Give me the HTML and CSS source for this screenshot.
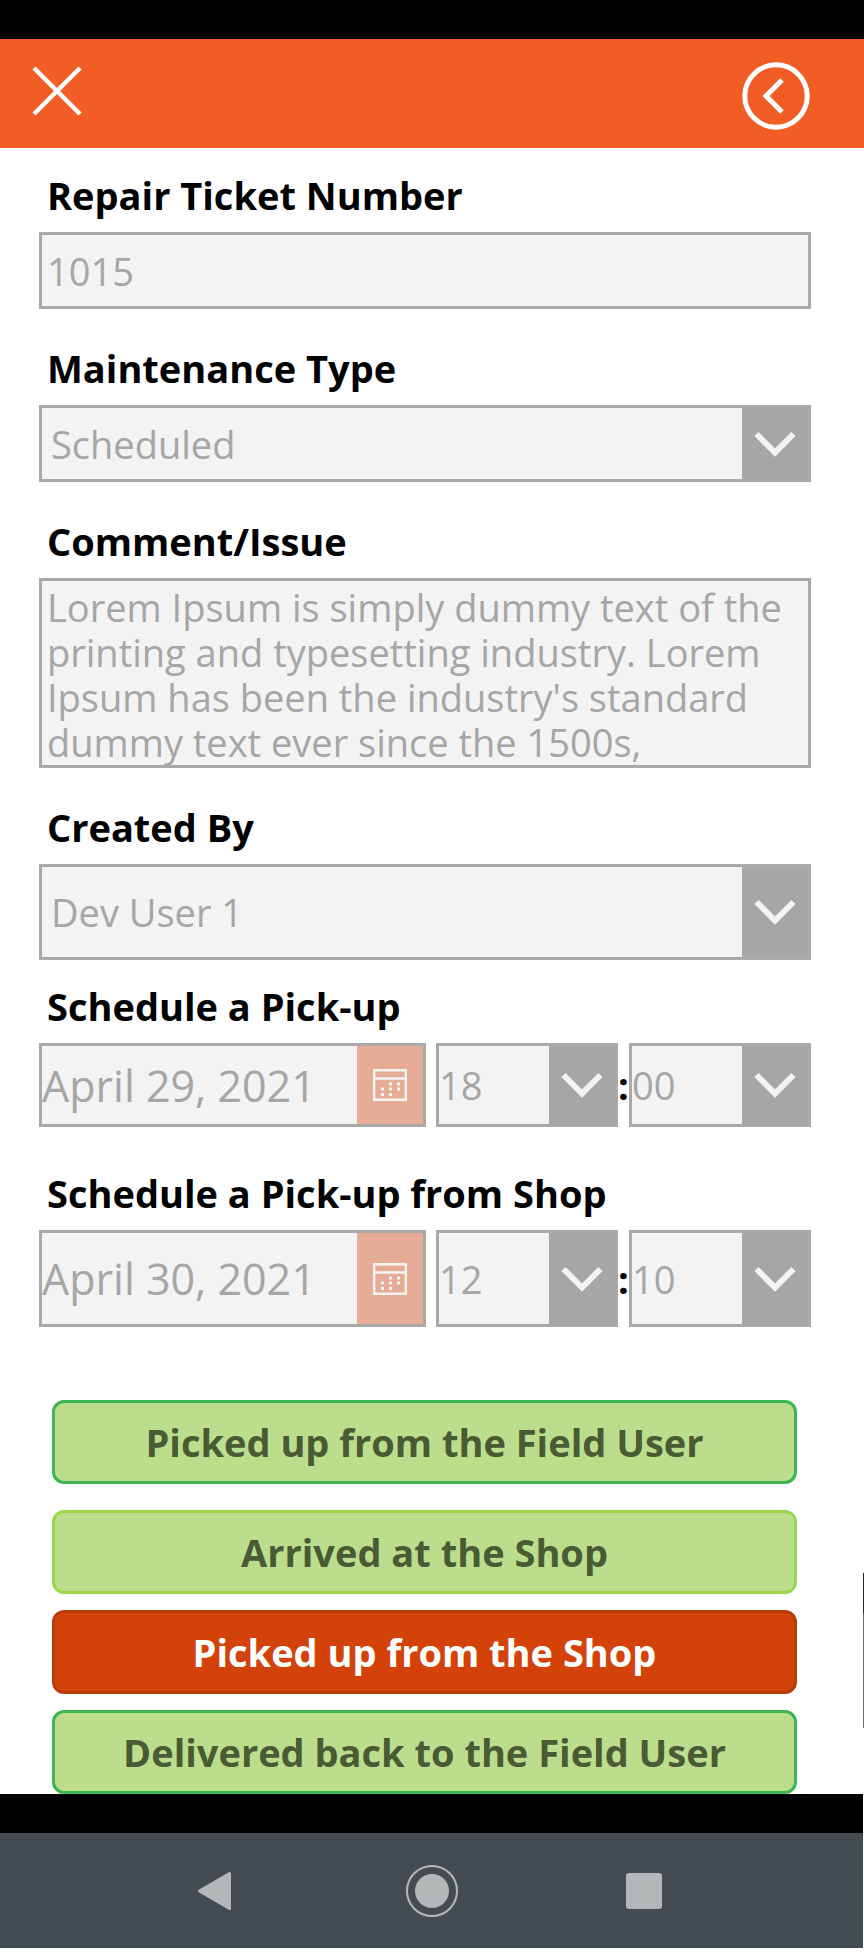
FILE: index.html
```html
<!DOCTYPE html>
<html lang="en">
<head>
    <meta charset="UTF-8">
    <meta name="viewport" content="width=device-width, initial-scale=1">
    <title>Repair Ticket</title>
    <link rel="stylesheet" href="styles.css">
</head>
<body>
    <!-- shared icons -->
    <svg class="sprite" width="0" height="0">
        <symbol id="chevron" viewBox="0 0 42 26">
            <path d="M2.5 3 L21 21.500 L39.5 3" fill="none" stroke="currentColor" stroke-width="6"/>
        </symbol>
        <symbol id="calendar" viewBox="0 0 34 32">
            <path d="M1.2 1.2 H32.8 V30.8 H1.2 Z M1 9.5 H33" fill="none" stroke="currentColor" stroke-width="2.4"/>
            <path d="M16 13.5h3v3h-3z M24 13.5h3v3h-3z M8 18.5h3v3h-3z M16 18.5h3v3h-3z M24 18.5h3v3h-3z M8 24h3v3h-3z M16 24h3v3h-3z" fill="currentColor"/>
        </symbol>
    </svg>

    <div class="status-bar"></div>

    <header class="header">
        <button class="icon-button close" type="button" aria-label="Close">
            <svg width="50" height="50" viewBox="0 0 50 50"><path d="M2 2 L48 48 M48 2 L2 48" stroke="#fff" stroke-width="4.5"/></svg>
        </button>
        <button class="icon-button back" type="button" aria-label="Back">
            <svg width="68" height="68" viewBox="0 0 68 68" fill="none" stroke="#fff" stroke-width="5">
                <circle cx="34" cy="34" r="31.2"/>
                <path d="M40 18 L24 34 L40 50"/>
            </svg>
        </button>
    </header>

    <form class="ticket">
        <div class="field">
            <label for="ticket-number">Repair Ticket Number</label>
            <div class="box"><input id="ticket-number" type="text" value="1015" disabled></div>
        </div>

        <div class="field">
            <label for="maintenance">Maintenance Type</label>
            <div class="box">
                <select id="maintenance" disabled><option>Scheduled</option></select>
                <span class="arrow"><svg><use href="#chevron"/></svg></span>
            </div>
        </div>

        <div class="field">
            <label for="comment">Comment/Issue</label>
            <div class="box box-comment">
                <textarea id="comment" disabled>Lorem Ipsum is simply dummy text of the printing and typesetting industry. Lorem Ipsum has been the industry's standard dummy text ever since the 1500s,</textarea>
            </div>
        </div>

        <div class="field field-user">
            <label for="created-by">Created By</label>
            <div class="box box-tall">
                <select id="created-by" disabled><option>Dev User 1</option></select>
                <span class="arrow"><svg><use href="#chevron"/></svg></span>
            </div>
        </div>

        <div class="field field-pickup">
            <label for="pickup-date">Schedule a Pick-up</label>
            <div class="schedule">
                <div class="box box-date">
                    <input id="pickup-date" type="text" value="April 29, 2021" disabled>
                    <button class="calendar" type="button" aria-label="Choose date" disabled><svg><use href="#calendar"/></svg></button>
                </div>
                <div class="box box-time">
                    <select aria-label="Pick-up hour" disabled><option>18</option></select>
                    <span class="arrow"><svg><use href="#chevron"/></svg></span>
                </div>
                <span class="colon">:</span>
                <div class="box box-time">
                    <select aria-label="Pick-up minute" disabled><option>00</option></select>
                    <span class="arrow"><svg><use href="#chevron"/></svg></span>
                </div>
            </div>
        </div>

        <div class="field field-shop">
            <label for="shop-date">Schedule a Pick-up from Shop</label>
            <div class="schedule schedule-tall">
                <div class="box box-date">
                    <input id="shop-date" type="text" value="April 30, 2021" disabled>
                    <button class="calendar" type="button" aria-label="Choose date" disabled><svg><use href="#calendar"/></svg></button>
                </div>
                <div class="box box-time">
                    <select aria-label="Shop pick-up hour" disabled><option>12</option></select>
                    <span class="arrow"><svg><use href="#chevron"/></svg></span>
                </div>
                <span class="colon">:</span>
                <div class="box box-time">
                    <select aria-label="Shop pick-up minute" disabled><option>10</option></select>
                    <span class="arrow"><svg><use href="#chevron"/></svg></span>
                </div>
            </div>
        </div>

        <div class="actions">
            <button class="action action-first" type="button">Picked up from the Field User</button>
            <button class="action is-light" type="button">Arrived at the Shop</button>
            <button class="action is-current" type="button">Picked up from the Shop</button>
            <button class="action" type="button">Delivered back to the Field User</button>
        </div>

        <span class="edge-handle"></span>
    </form>

    <div class="bottom-bar"></div>
    <nav class="nav">
        <button class="nav-button" type="button" aria-label="Back">
            <svg width="56" height="56" viewBox="0 0 56 56"><path d="M7.5 28 L37.5 10.500 V45.500 Z" fill="#b3b7b8" stroke="#b3b7b8" stroke-width="3" stroke-linejoin="round"/></svg>
        </button>
        <button class="nav-button" type="button" aria-label="Home">
            <svg width="56" height="56" viewBox="0 0 56 56"><circle cx="28" cy="28" r="25" fill="none" stroke="#b3b7b8" stroke-width="2"/><circle cx="28" cy="28" r="17" fill="#b3b7b8"/></svg>
        </button>
        <button class="nav-button" type="button" aria-label="Recent apps">
            <svg width="56" height="56" viewBox="0 0 56 56"><rect x="10" y="10" width="36" height="36" rx="3" fill="#b3b7b8"/></svg>
        </button>
    </nav>
</body>
</html>
```
FILE: styles.css
```css
* {
    box-sizing: border-box;
}

body {
    margin: 0;
    background: white;
    font-family: "Open Sans", "Noto Sans", sans-serif;
    font-size: 38px;
}

button, input, select, textarea {
    appearance: none;
    margin: 0;
    padding: 0;
    border: 0;
    border-radius: 0;
    background: none;
    font: inherit;
}

svg {
    display: block;
}

.sprite {
    position: absolute;
}

.status-bar {
    height: 39px;
    background: black;
}

.header {
    display: flex;
    justify-content: space-between;
    align-items: flex-start;
    height: 109px;
    padding: 23px 54px 0 32px;
    background: #f25d26;
}

.close {
    padding-top: 4px;
}

/* form */
.ticket {
    position: relative;
    padding: 23px 53px 0 39px;
}

.field {
    margin-bottom: 35px;
}

.field label {
    display: block;
    padding-left: 8px;
    margin-bottom: 13px;
    line-height: 48px;
    font-weight: bold;
}

.box {
    display: flex;
    height: 77px;
    border: 3px solid #a9a9a9;
    background: #f3f3f3;
}

.box input,
.box select,
.box textarea {
    flex: 1;
    min-width: 0;
    padding: 0 5px;
    color: #a6a6a6;
    opacity: 1;
}

.box select {
    padding: 0 9px;
}

.box textarea {
    padding: 4px 5px;
    line-height: 45px;
    resize: none;
    overflow: hidden;
}

.box-comment {
    height: 190px;
}

.box-tall {
    height: 96px;
}

.arrow,
.calendar {
    display: flex;
    flex: none;
    justify-content: center;
    align-items: center;
    width: 66px;
}

.arrow {
    background: #a6a6a6;
    color: #f3f3f3;
}

.arrow svg {
    width: 42px;
    height: 26px;
}

.box .calendar {
    background: #e7ac96;
    color: #f3f3f3;
}

.calendar svg {
    width: 34px;
    height: 32px;
}

/* date and time */
.field-user {
    margin-bottom: 22px;
}

.field-pickup {
    margin-bottom: 42px;
}

.field-shop {
    margin-bottom: 73px;
}

.schedule {
    display: flex;
    align-items: center;
}

.schedule .box {
    height: 84px;
}

.schedule-tall .box {
    height: 97px;
}

.box-date {
    flex: 1;
    min-width: 0;
    margin-right: 10px;
}

.schedule .box-date input {
    padding: 0;
    font-size: 43px;
}

.box-time {
    flex: none;
    width: 182px;
}

.schedule .box-time select {
    padding: 0;
}

.colon {
    width: 11px;
    font-weight: bold;
    line-height: 48px;
}

/* actions */
.actions {
    display: flex;
    flex-direction: column;
    gap: 16px;
    padding: 0 14px 0 13px;
}

.action {
    height: 84px;
    border: 3px solid #3db552;
    border-radius: 12px;
    background: #bcde8c;
    color: #4a5a35;
    font-weight: bold;
}

.action-first {
    margin-bottom: 10px;
}

.action.is-light {
    border-color: #9dd54c;
}

.action.is-current {
    border-color: #b93c0c;
    background: #d34209;
    color: white;
}

/* pull handle on the right edge of the screen */
.edge-handle {
    position: absolute;
    right: 0;
    bottom: 66px;
    width: 1px;
    height: 155px;
    border-top: 40px solid #262626;
    background: #6b6b6b;
}

/* system bar */
.bottom-bar {
    height: 39px;
    margin-right: 1px;
    background: black;
}

.nav {
    display: flex;
    justify-content: center;
    height: 115px;
    margin: 0 1px 4px 0;
    background: #454c51;
}

.nav-button {
    display: flex;
    justify-content: center;
    align-items: center;
    width: 212px;
}
```
